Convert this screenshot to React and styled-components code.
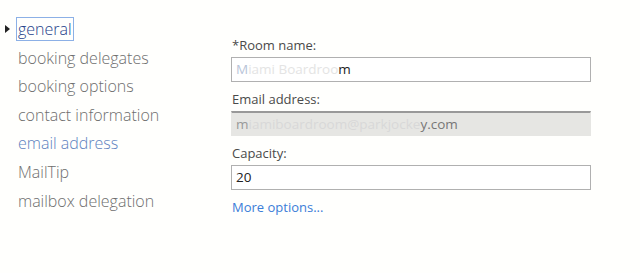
import React from 'react';
import styled, { createGlobalStyle } from 'styled-components';

const GlobalStyle = createGlobalStyle`
  body {
    margin: 0;
    background: #fffffd;
    font-family: 'Open Sans', 'Noto Sans', sans-serif;
  }
`;

const Page = styled.div`
  display: flex;
  width: 640px;
  height: 273px;
  background: #fffffd;
`;

const Nav = styled.ul`
  list-style: none;
  margin: 0;
  padding: 15px 0 0 0;
  width: 231px;
`;

const NavItem = styled.li`
  position: relative;
  height: 28.6px;
  padding-left: 18px;
  font-size: 16px;
  font-weight: 300;
  line-height: 28px;
  color: ${p => (p.$link ? '#5d82bf' : '#6e6e6e')};
`;

const Arrow = styled.span`
  position: absolute;
  left: 5px;
  top: 10px;
  width: 0;
  height: 0;
  border-top: 4px solid transparent;
  border-bottom: 4px solid transparent;
  border-left: 5px solid #222;
`;

const Focused = styled.span`
  display: inline-block;
  margin-left: -2px;
  padding: 0 1px;
  line-height: 22px;
  border: 1px solid #8cb0e6;
  color: #24418a;
`;

const Form = styled.div`
  display: flex;
  flex-direction: column;
  padding-top: 36px;
  width: 360px;
`;

const Label = styled.label`
  font-size: 13px;
  color: #4a4a4a;
  line-height: 18px;
  margin-bottom: 3px;
  padding-left: 1px;
`;

const Field = styled.div`
  box-sizing: border-box;
  height: 25px;
  margin-bottom: 8px;
  padding: 0 4px;
  font-size: 13.5px;
  line-height: 22px;
  color: #222;
  background: ${p => (p.$readonly ? '#e6e6e3' : '#fff')};
  border: 1px solid ${p => (p.$readonly ? '#e6e6e3' : '#b0b0b0')};
  border-top: ${p => (p.$readonly ? '2px solid #999' : '1px solid #b0b0b0')};
`;

const Faded = styled.span`
  color: ${p => p.$tone || '#e4e4e4'};
`;

const Link = styled.a`
  font-size: 13px;
  color: #3b7dd8;
  line-height: 18px;
  padding-left: 1px;
  text-decoration: none;
`;

const items = [
  'booking delegates',
  'booking options',
  'contact information',
  'email address',
  'MailTip',
  'mailbox delegation'
];

export default function App() {
  return (
    <Page>
      <GlobalStyle />
      <Nav>
        <NavItem>
          <Arrow />
          <Focused>general</Focused>
        </NavItem>
        {items.map(item => (
          <NavItem key={item} $link={item === 'email address'}>
            {item}
          </NavItem>
        ))}
      </Nav>
      <Form>
        <Label>*Room name:</Label>
        <Field>
          <Faded $tone="#b8c4d8">M</Faded>
          <Faded>iami Boardroo</Faded>m
        </Field>
        <Label>Email address:</Label>
        <Field $readonly>
          <Faded $tone="#999">m</Faded>
          <Faded $tone="#d8d8d8">iamiboardroom@parkjocke</Faded>
          <Faded $tone="#777">y.com</Faded>
        </Field>
        <Label>Capacity:</Label>
        <Field>20</Field>
        <Link href="#">More options...</Link>
      </Form>
    </Page>
  );
}
